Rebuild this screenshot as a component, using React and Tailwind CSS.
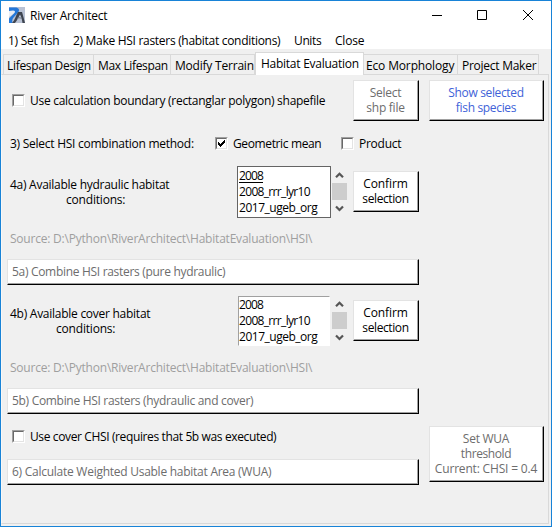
import { useLayoutEffect, useRef, useState } from "react";

// A single line of text whose tracking is adjusted to fill `w` pixels.
function Line({ w, className = "", children }) {
  const ref = useRef(null);
  const [tracking, setTracking] = useState(0);
  useLayoutEffect(() => {
    const natural = ref.current.getBoundingClientRect().width;
    setTracking((w - 0.7 - natural) / String(children).length);
  }, []);
  return (
    <span className={"block h-[15px] shrink-0 leading-[15px] whitespace-nowrap " + className}>
      <span ref={ref} className="inline-block" style={{ letterSpacing: tracking }}>
        {children}
      </span>
    </span>
  );
}

function Button({ className = "", children }) {
  return (
    <button className={"flex shrink-0 border-t border-l border-t-[#e3e3e3] border-l-[#e3e3e3] border-r border-b border-r-black border-b-black " + className}>
      <span className="flex h-full w-full flex-col border-r border-b border-[#a0a0a0] bg-white">
        {children}
      </span>
    </button>
  );
}

function Checkbox({ checked }) {
  return (
    <span className="block size-[13px] shrink-0 border border-t-[#a0a0a0] border-l-[#a0a0a0] border-r-white border-b-white">
      <span className="block size-[11px] border border-t-[#696969] border-l-[#696969] border-r-[#e3e3e3] border-b-[#e3e3e3] bg-white">
        {checked && (
          <svg viewBox="0 0 9 9" className="block size-[9px]" shapeRendering="crispEdges">
            <path d="M1 3h1v1h1v1h1v-1h1v-1h1v-1h1v-1h1v3h-1v1h-1v1h-1v1h-1v1h-1v-1h-1v-1h-1z" />
          </svg>
        )}
      </span>
    </span>
  );
}

function Scrollbar() {
  return (
    <div className="flex w-[15px] flex-col items-center">
      <svg viewBox="0 0 15 17" className="h-[17px] w-[15px]">
        <path d="M4 11.3L7.5 7.8L11 11.3" fill="none" stroke="#555" strokeWidth="2.2" />
      </svg>
      <div className="h-[17px] w-[15px] bg-[#cdcdcd]" />
      <svg viewBox="0 0 15 17" className="h-[17px] w-[15px]">
        <path d="M4 6.5L7.5 10L11 6.5" fill="none" stroke="#555" strokeWidth="2.2" />
      </svg>
    </div>
  );
}

function ListItems({ active }) {
  return (
    <>
      <div className="h-4">
        <Line w={24.7} className={active ? "h-[14px] w-6 border-b border-black" : ""}>2008</Line>
      </div>
      <div className="h-4"><Line w={71.7}>2008_rrr_lyr10</Line></div>
      <div className="h-4"><Line w={79}>2017_ugeb_org</Line></div>
    </>
  );
}

function ConfirmButton() {
  return (
    <Button className="ml-1.5 h-[41px] w-[66px]">
      <span className="flex flex-col items-center pt-1">
        <Line w={45}>Confirm</Line>
        <Line w={47}>selection</Line>
      </span>
    </Button>
  );
}

function WideButton({ w, children }) {
  return (
    <Button className="h-[26px] w-[412px] text-[#6d6d6d]">
      <span className="pt-1 pl-1 text-left"><Line w={w}>{children}</Line></span>
    </Button>
  );
}

function Tab({ w, className, children }) {
  return (
    <div className={"h-5 shrink-0 border-t border-r border-[#d9d9d9] pt-[3px] " + className}>
      <Line w={w}>{children}</Line>
    </div>
  );
}

export default function App() {
  return (
    <div className="flex h-[527px] w-[552px] flex-col overflow-hidden border border-[#1883d7] bg-[#f0f0f0] font-['Open_Sans','Noto_Sans',sans-serif] text-[12px] text-black">
      <header className="flex h-[29px] shrink-0 bg-white pt-1.5 pl-2">
        <svg viewBox="0 0 16 16" className="size-4 shrink-0">
          <path fill="#b9c2d4" d="M0 0h16v16H0z" />
          <path fill="#e8edf5" d="M0 3h6l1 2-7 5z" />
          <path fill="#2477d8" d="M0 0.5h6c4 0 5 2.5 3 5L5 10c-2 2-2 4-1.5 6H0v-4.5L5.500 6C6.500 4.500 6 3.500 4 3.500L0 4z" />
          <path fill="#3f4550" d="M3 16c3-3 4-8 6-11h4c1 3 2 7 3 11h-2.500c-.5-3-1-6-2.500-8.500C9.500 10 8.500 13 6 16z" />
          <path d="M8 11.500c1.500-1 3-1 4.500 0" fill="none" stroke="#6a717e" />
        </svg>
        <h1 className="pt-[1px] pl-[5px]"><Line w={78}>River Architect</Line></h1>
        <svg viewBox="0 0 110 16" className="mt-0.5 mr-[14px] ml-auto h-4 w-[110px]" fill="none" stroke="black">
          <path d="M5 6.5h10M50.5 1.5h9v9h-9z" />
          <path d="M96 1l10 10M106 1L96 11" />
        </svg>
      </header>
      <nav className="flex h-[19px] shrink-0 bg-white pt-[3px] pl-[7px]">
        <Line w={52} className="w-[65px]">1) Set fish</Line>
        <Line w={208} className="w-[221px]">2) Make HSI rasters (habitat conditions)</Line>
        <Line w={28} className="w-[41px]">Units</Line>
        <Line w={30}>Close</Line>
      </nav>
      <div className="flex h-[25px] shrink-0 items-end pl-[2px]">
        <Tab w={84.5} className="w-[91px] border-l pl-[3px]">Lifespan Design</Tab>
        <Tab w={70.5} className="w-[77px] pl-[4px]">Max Lifespan</Tab>
        <Tab w={79.5} className="w-[84px] pl-[4px]">Modify Terrain</Tab>
        <div className="z-10 -mb-px h-[23px] w-[109px] shrink-0 border-t border-r border-l border-[#d9d9d9] bg-white pt-[3px] pl-[5px]">
          <Line w={98.5}>Habitat Evaluation</Line>
        </div>
        <Tab w={89} className="w-[94px] pl-[2px]">Eco Morphology</Tab>
        <Tab w={75} className="w-[81px] pl-[4px]">Project Maker</Tab>
      </div>
      <main className="mr-[2px] flex h-[450px] shrink-0 flex-col border border-[#d9d9d9] border-l-[#f8f8f8] pt-[5px] pl-[5px]">
        <div className="flex h-[41px] shrink-0">
          <div className="flex w-[346px] pt-[13px] pl-[5px]">
            <div className="pt-[1px]"><Checkbox /></div>
            <Line w={296} className="ml-[5px]">Use calculation boundary (rectanglar polygon) shapefile</Line>
          </div>
          <Button className="h-[41px] w-[66px] text-[#6d6d6d]">
            <span className="flex flex-col items-center pt-1">
              <Line w={32}>Select</Line>
              <Line w={39}>shp file</Line>
            </span>
          </Button>
          <Button className="ml-2.5 h-[41px] w-[115px] text-[#4062d8]">
            <span className="flex flex-col items-center pt-1">
              <Line w={76}>Show selected</Line>
              <Line w={61}>fish species</Line>
            </span>
          </Button>
        </div>
        <div className="flex h-[45px] shrink-0 pt-[15px] pl-[3px]">
          <Line w={184.5} className="w-[205px]">3) Select HSI combination method:</Line>
          <div className="pt-[1px]"><Checkbox checked /></div>
          <Line w={89} className="ml-[5px] w-[108px]">Geometric mean</Line>
          <div className="pt-[1px]"><Checkbox /></div>
          <Line w={43} className="ml-[5px]">Product</Line>
        </div>
        <div className="flex h-[52px] shrink-0 items-start">
          <div className="flex w-[230px] flex-col pt-[11px] pl-[3px]">
            <div className="flex w-[160px] flex-col items-start">
              <Line w={160}>4a) Available hydraulic habitat</Line>
              <Line w={60} className="ml-14">conditions:</Line>
            </div>
          </div>
          <div className="mr-px h-[52px] w-[94px] border border-[#646464] bg-white pt-px pl-px">
            <ListItems active />
          </div>
          <Scrollbar />
          <div className="pt-[5px]"><ConfirmButton /></div>
        </div>
        <div className="h-[41px] shrink-0 pt-[13px] pl-[3px] text-[#9f9f9f]">
          <Line w={303}>Source: D:\Python\RiverArchitect\HabitatEvaluation\HSI\</Line>
        </div>
        <WideButton w={214}>5a) Combine HSI rasters (pure hydraulic)</WideButton>
        <div className="flex h-[61px] shrink-0 items-start pt-2.5">
          <div className="flex w-[231px] flex-col pt-[11px] pl-[3px]">
            <div className="flex w-[141px] flex-col items-start">
              <Line w={141}>4b) Available cover habitat</Line>
              <Line w={60} className="ml-[46px]">conditions:</Line>
            </div>
          </div>
          <div className="mt-px mr-[2px] h-[50px] w-[92px] border border-t-[#a0a0a0] border-r-white border-b-white border-l-[#a0a0a0] bg-white">
            <ListItems />
          </div>
          <Scrollbar />
          <div className="pt-[5px]"><ConfirmButton /></div>
        </div>
        <div className="h-[42px] shrink-0 pt-[14px] pl-[3px] text-[#9f9f9f]">
          <Line w={303}>Source: D:\Python\RiverArchitect\HabitatEvaluation\HSI\</Line>
        </div>
        <WideButton w={242}>5b) Combine HSI rasters (hydraulic and cover)</WideButton>
        <div className="flex">
          <div className="w-[412px] shrink-0">
            <div className="flex h-[45px] pt-[15px] pl-[5px]">
              <div className="pt-[1px]"><Checkbox /></div>
              <Line w={247} className="ml-[5px]">Use cover CHSI (requires that 5b was executed)</Line>
            </div>
            <WideButton w={260}>6) Calculate Weighted Usable habitat Area (WUA)</WideButton>
          </div>
          <Button className="mt-3 ml-2.5 h-14 w-[115px] text-[#6d6d6d]">
            <span className="flex flex-col items-center pt-1">
              <Line w={47}>Set WUA</Line>
              <Line w={51}>threshold</Line>
              <Line w={103}>Current: CHSI = 0.4</Line>
            </span>
          </Button>
        </div>
      </main>
    </div>
  );
}
